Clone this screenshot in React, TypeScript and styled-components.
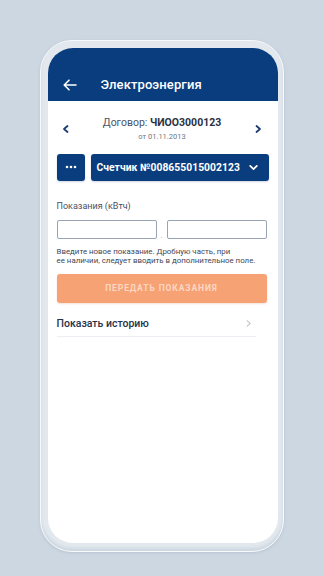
import React from "react";
import styled, { createGlobalStyle } from "styled-components";

const Global = createGlobalStyle`
  html, body { margin: 0; padding: 0; background: #cdd7e2; }
  body { font-family: Roboto, "Noto Sans", sans-serif; -webkit-font-smoothing: antialiased; }
  * { box-sizing: border-box; }
`;

const Page = styled.div`
  width: 324px;
  height: 576px;
  background: #cdd7e2;
  padding: 40px 40px 0 40px;
`;

const Frame = styled.div`
  width: 244px;
  height: 512px;
  border-radius: 32px;
  background: #e2e8ee;
  border: 1.5px solid #f7f9fb;
  box-shadow: 0 1px 3px rgba(120, 140, 165, 0.25), inset 0 -3px 3px rgba(170, 185, 200, 0.35);
  padding: 6.5px 5.5px 8.5px 6.5px;
`;

const Screen = styled.div`
  width: 100%;
  height: 100%;
  border-radius: 25px;
  background: #ffffff;
  overflow: hidden;
  display: flex;
  flex-direction: column;
`;

const Header = styled.div`
  height: 53px;
  background: #0a3d7e;
  display: flex;
  align-items: center;
  padding: 21px 0 0 14px;
  flex-shrink: 0;
`;

const BackButton = styled.div`
  width: 16px;
  height: 16px;
  display: flex;
  align-items: center;
  justify-content: center;
  margin-right: 23px;
`;

const Title = styled.div`
  color: #ffffff;
  font-size: 13px;
  font-weight: 500;
  letter-spacing: 0.1px;
`;

const Body = styled.div`
  padding: 0 9px 0 9px;
  display: flex;
  flex-direction: column;
`;

const ContractRow = styled.div`
  display: flex;
  align-items: center;
  justify-content: space-between;
  padding: 9px 5px 0 4px;
  height: 48px;
`;

const ContractText = styled.div`
  display: flex;
  flex-direction: column;
  align-items: center;
  gap: 2px;
`;

const ContractTitle = styled.div`
  font-size: 10.5px;
  color: #4a5262;
  line-height: 14px;
  b { font-weight: 700; color: #2a3142; }
`;

const ContractDate = styled.div`
  font-size: 7.5px;
  color: #6e7684;
  line-height: 10px;
`;

const SelectorRow = styled.div`
  display: flex;
  gap: 6px;
  margin-top: 5px;
  height: 27px;
`;

const BlueButton = styled.div<{ $grow?: boolean }>`
  background: #0a3d7e;
  border-radius: 3px;
  color: #fff;
  display: flex;
  align-items: center;
  ${(p) => (p.$grow ? "flex: 1; padding: 0 10px 0 6px; justify-content: space-between;" : "width: 28px; justify-content: center;")}
  box-shadow: 0 1px 2px rgba(10, 40, 90, 0.2);
`;

const CounterText = styled.span`
  font-size: 10.3px;
  font-weight: 700;
  letter-spacing: 0.05px;
`;

const Label = styled.div`
  margin-top: 19px;
  font-size: 9px;
  color: #4a5161;
  line-height: 12px;
`;

const InputsRow = styled.div`
  display: flex;
  align-items: flex-end;
  margin-top: 8px;
  height: 19px;
`;

const Input = styled.div`
  width: 100px;
  height: 19px;
  border: 1px solid #98a3b4;
  border-radius: 2px;
  background: #fff;
`;

const Dot = styled.div`
  width: 10px;
  text-align: center;
  font-size: 7px;
  color: #8b94a3;
  line-height: 6px;
`;

const Hint = styled.div`
  margin-top: 8px;
  font-size: 7.9px;
  line-height: 9.5px;
  color: #3f4655;
  white-space: nowrap;
`;

const SubmitButton = styled.div`
  margin-top: 8px;
  height: 29px;
  width: 210px;
  border-radius: 3px;
  background: #f7a274;
  color: #fbd8c4;
  font-size: 8.5px;
  font-weight: 700;
  letter-spacing: 0.9px;
  display: flex;
  align-items: center;
  justify-content: center;
  box-shadow: 0 1px 2px rgba(200, 110, 60, 0.2);
`;

const HistoryRow = styled.div`
  margin-top: 9px;
  width: 199px;
  height: 25px;
  display: flex;
  align-items: center;
  justify-content: space-between;
  border-bottom: 1px solid #eceff3;
  padding-right: 3px;
`;

const HistoryText = styled.span`
  font-size: 10.5px;
  font-weight: 500;
  color: #27314a;
`;

const Chevron = ({ dir, color, size = 10, sw = 1.8 }: { dir: "left" | "right" | "down"; color: string; size?: number; sw?: number }) => {
  const d = dir === "left" ? "M6.5 2 L3 5 L6.5 8" : dir === "right" ? "M3.5 2 L7 5 L3.5 8" : "M2 3.5 L5 6.5 L8 3.5";
  return (
    <svg width={size} height={size} viewBox="0 0 10 10" fill="none">
      <path d={d} stroke={color} strokeWidth={sw} strokeLinecap="round" strokeLinejoin="round" />
    </svg>
  );
};

export default function App() {
  return (
    <>
      <Global />
      <Page>
        <Frame>
          <Screen>
            <Header>
              <BackButton>
                <svg width="14" height="12" viewBox="0 0 14 12" fill="none">
                  <path d="M13 6 H1.5 M6 1.2 L1.2 6 L6 10.8" stroke="#fff" strokeWidth="1.6" strokeLinecap="round" strokeLinejoin="round" />
                </svg>
              </BackButton>
              <Title>Электроэнергия</Title>
            </Header>
            <Body>
              <ContractRow>
                <Chevron dir="left" color="#1d3d72" />
                <ContractText>
                  <ContractTitle>
                    Договор: <b>ЧИОО3000123</b>
                  </ContractTitle>
                  <ContractDate>от 01.11.2013</ContractDate>
                </ContractText>
                <Chevron dir="right" color="#1d3d72" />
              </ContractRow>
              <SelectorRow>
                <BlueButton>
                  <svg width="12" height="4" viewBox="0 0 12 4">
                    <circle cx="2" cy="2" r="1.3" fill="#fff" />
                    <circle cx="6" cy="2" r="1.3" fill="#fff" />
                    <circle cx="10" cy="2" r="1.3" fill="#fff" />
                  </svg>
                </BlueButton>
                <BlueButton $grow>
                  <CounterText>Счетчик №008655015002123</CounterText>
                  <Chevron dir="down" color="#fff" size={11} sw={1.6} />
                </BlueButton>
              </SelectorRow>
              <Label>Показания (кВтч)</Label>
              <InputsRow>
                <Input />
                <Dot>.</Dot>
                <Input />
              </InputsRow>
              <Hint>
                Введите новое показание. Дробную часть, при
                <br />
                ее наличии, следует вводить в дополнительное поле.
              </Hint>
              <SubmitButton>ПЕРЕДАТЬ ПОКАЗАНИЯ</SubmitButton>
              <HistoryRow>
                <HistoryText>Показать историю</HistoryText>
                <Chevron dir="right" color="#a3aab5" size={9} sw={1.1} />
              </HistoryRow>
            </Body>
          </Screen>
        </Frame>
      </Page>
    </>
  );
}
